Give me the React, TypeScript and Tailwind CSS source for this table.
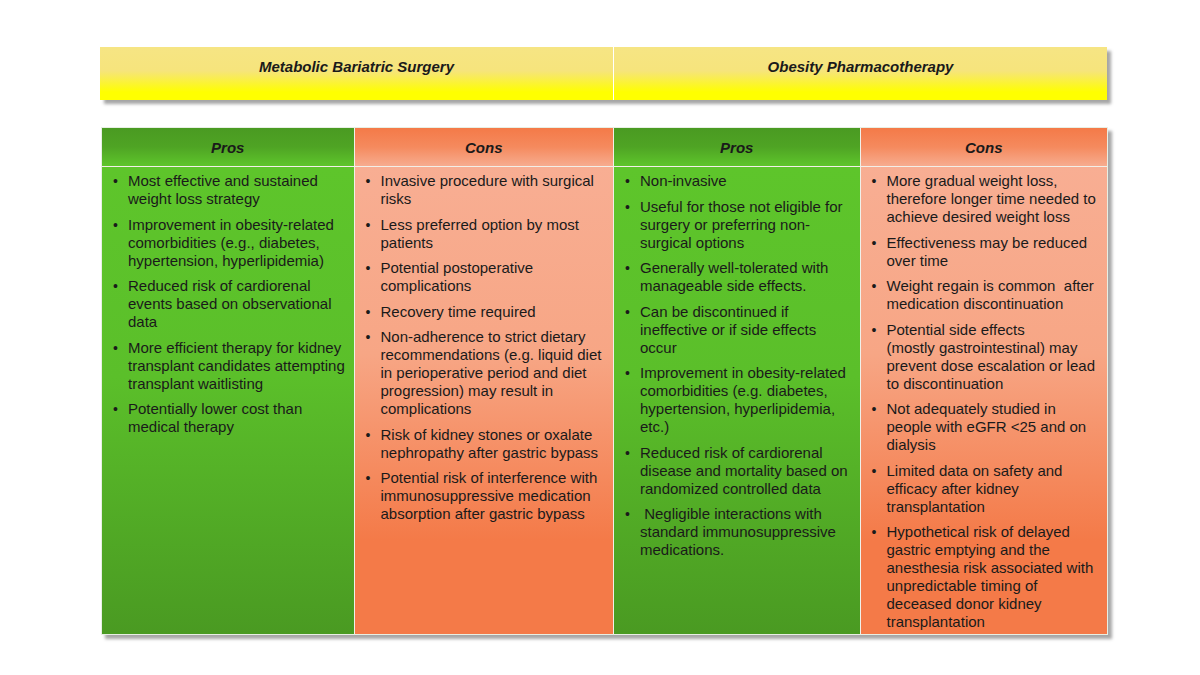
import React from "react";

type Item = React.ReactNode;

const cols: { title: string; kind: "pro" | "con"; items: Item[] }[] = [
  {
    title: "Pros",
    kind: "pro",
    items: [
      "Most effective and sustained weight loss strategy",
      "Improvement in obesity-related comorbidities (e.g., diabetes, hypertension, hyperlipidemia)",
      "Reduced risk of cardiorenal events based on observational data",
      "More efficient therapy for kidney transplant candidates attempting transplant waitlisting",
      "Potentially lower cost than medical therapy",
    ],
  },
  {
    title: "Cons",
    kind: "con",
    items: [
      "Invasive procedure with surgical risks",
      "Less preferred option by most patients",
      "Potential postoperative complications",
      "Recovery time required",
      "Non-adherence to strict dietary recommendations (e.g. liquid diet in perioperative period and diet progression) may result in complications",
      "Risk of kidney stones or oxalate nephropathy after gastric bypass",
      "Potential risk of interference with immunosuppressive medication absorption after gastric bypass",
    ],
  },
  {
    title: "Pros",
    kind: "pro",
    items: [
      "Non-invasive",
      "Useful for those not eligible for surgery or preferring non-surgical options",
      "Generally well-tolerated with manageable side effects.",
      "Can be discontinued if ineffective or if side effects occur",
      "Improvement in obesity-related comorbidities (e.g. diabetes, hypertension, hyperlipidemia, etc.)",
      "Reduced risk of cardiorenal disease and mortality based on randomized controlled data",
      "\u00a0Negligible interactions with standard immunosuppressive medications.",
    ],
  },
  {
    title: "Cons",
    kind: "con",
    items: [
      "More gradual weight loss, therefore longer time needed to achieve desired weight loss",
      "Effectiveness may be reduced over time",
      "Weight regain is common\u00a0 after medication discontinuation",
      <>
        Potential side effects
        <br />
        (mostly gastrointestinal) may prevent dose escalation or lead to discontinuation
      </>,
      "Not adequately studied in people with eGFR <25 and on dialysis",
      "Limited data on safety and efficacy after kidney transplantation",
      "Hypothetical risk of delayed gastric emptying and the anesthesia risk associated with unpredictable timing of deceased donor kidney transplantation",
    ],
  },
];

const widths = ["w-[253px]", "w-[260px]", "w-[247px]", "w-[247px]"];

function Cell({ items, kind }: { items: Item[]; kind: "pro" | "con" }) {
  const bg =
    kind === "pro"
      ? "bg-[linear-gradient(180deg,#5ec52b_0%,#5bbf2a_45%,#4a9a22_100%)]"
      : "bg-[linear-gradient(180deg,#f8ae93_0%,#f7a685_40%,#f47a48_80%,#f47a48_100%)]";
  return (
    <div className={`h-full pt-[5px] pl-[11px] pr-[6px] ${bg}`}>
      <ul className="flex flex-col gap-[7.5px]">
        {items.map((t, i) => (
          <li key={i} className="flex">
            <span className="w-[15px] shrink-0 leading-[18px] text-[14px]">•</span>
            <span className="leading-[18px]">{t}</span>
          </li>
        ))}
      </ul>
    </div>
  );
}

export default function App() {
  return (
    <div
      className="w-[1200px] h-[675px] bg-white text-[#1a1a1a] text-[15px]"
      style={{ fontFamily: '"Liberation Sans", Arial, sans-serif' }}
    >
      <div className="pt-[47px] pl-[100px]">
        <div className="flex w-[1007px] h-[53px] shadow-[4px_4px_3px_rgba(0,0,0,0.35)]">
          {["Metabolic Bariatric Surgery", "Obesity Pharmacotherapy"].map((t, i) => (
            <div
              key={i}
              className={`flex justify-center pt-[11px] leading-[18px] font-bold italic bg-[linear-gradient(180deg,#f6e584_0%,#f6e47c_45%,#ffff00_85%,#ffff00_100%)] ${
                i === 0 ? "w-[514px] border-r border-white" : "w-[493px]"
              }`}
            >
              {t}
            </div>
          ))}
        </div>

        <div className="mt-[27px] ml-[1px] flex w-[1007px] h-[508px] border border-[#e8efe4] shadow-[4px_4px_3px_rgba(0,0,0,0.35)]">
          {cols.map((c, i) => (
            <div
              key={i}
              className={`${widths[i]} flex flex-col ${i < 3 ? "border-r border-[#f0f0ea]" : ""}`}
            >
              <div
                className={`h-[39px] shrink-0 flex items-center justify-center pt-[2px] font-bold italic border-b border-[#f3efe8] ${
                  c.kind === "pro"
                    ? "bg-[linear-gradient(180deg,#4a9a22_0%,#4fa424_50%,#5ec52b_100%)]"
                    : "bg-[linear-gradient(180deg,#f47a48_0%,#f58a5e_50%,#f7ac8f_100%)]"
                }`}
              >
                {c.title}
              </div>
              <div className="flex-1">
                <Cell items={c.items} kind={c.kind} />
              </div>
            </div>
          ))}
        </div>
      </div>
    </div>
  );
}
